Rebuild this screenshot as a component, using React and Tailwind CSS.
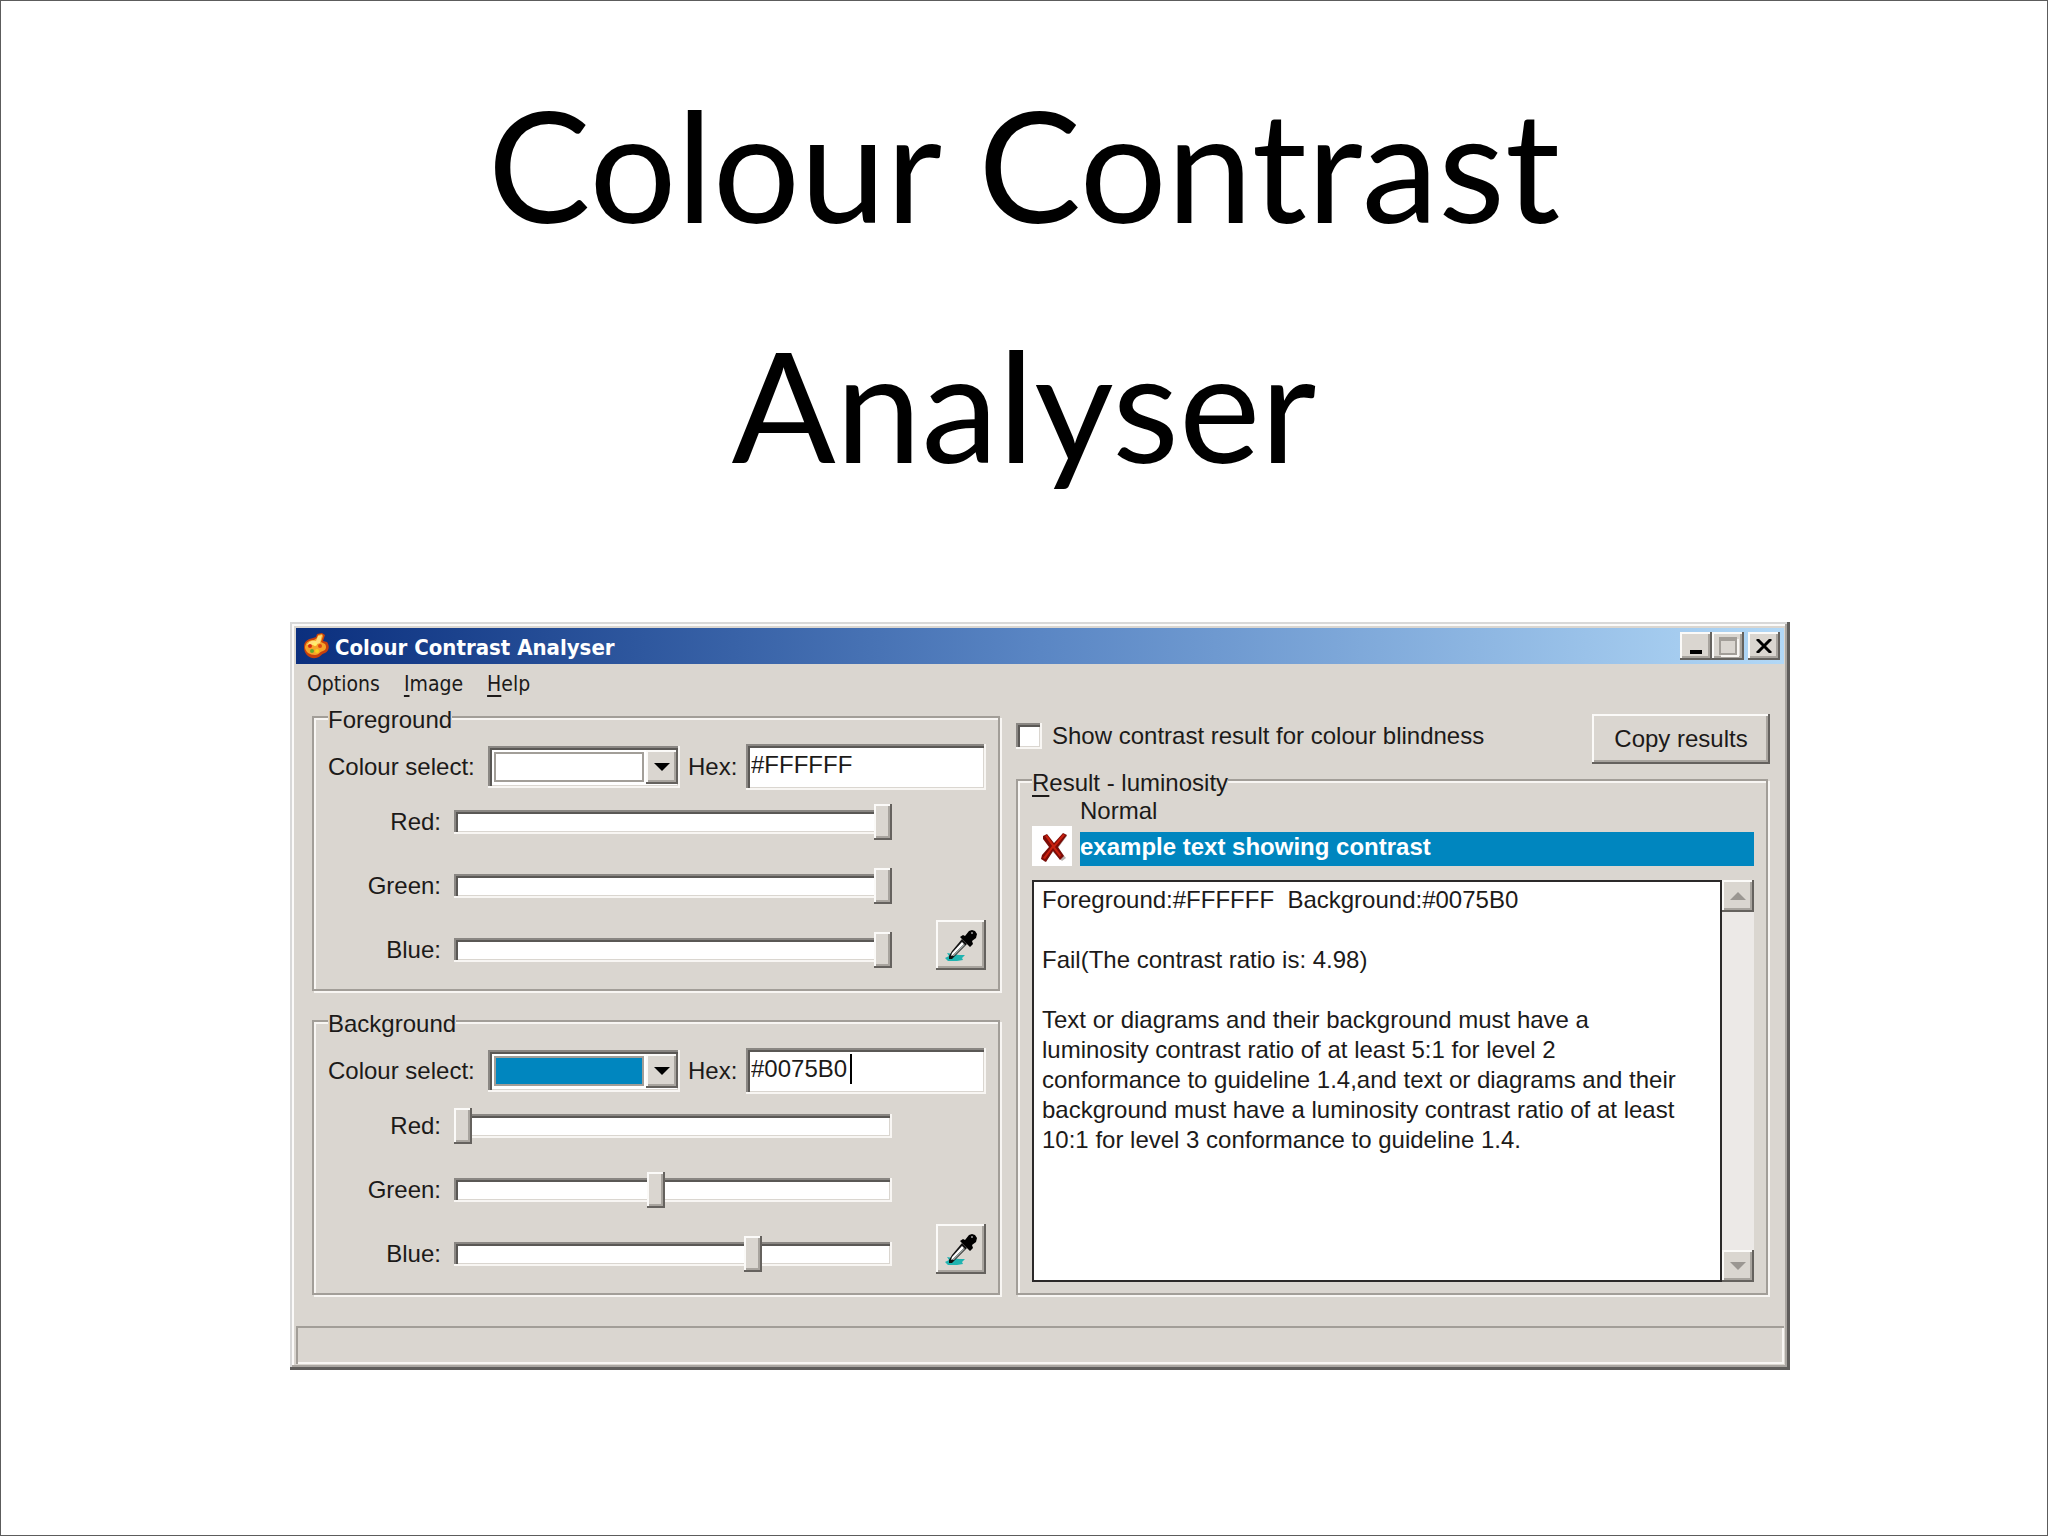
import React, { useState } from "react";
import clsx from "clsx";

const RAISED =
  "bg-[#dad6d0] shadow-[inset_-2px_-2px_0_#65625e,inset_2px_2px_0_#fbfaf8,inset_-4px_-4px_0_#a8a49e]";
const SUNKEN =
  "shadow-[inset_-2px_-2px_0_#f8f6f3,inset_2px_2px_0_#8a8783,inset_4px_4px_0_#5a5855,inset_-3px_-3px_0_#dad6d0]";
const GROUP =
  "min-w-0 border-2 border-[#a29e98] pl-3.5 pr-3 shadow-[2px_2px_0_#f8f6f3,inset_2px_2px_0_#f8f6f3]";

const RESULT_TEXT = `Foreground:#FFFFFF  Background:#0075B0

Fail(The contrast ratio is: 4.98)

Text or diagrams and their background must have a
luminosity contrast ratio of at least 5:1 for level 2
conformance to guideline 1.4,and text or diagrams and their
background must have a luminosity contrast ratio of at least
10:1 for level 3 conformance to guideline 1.4.`;

const PaletteIcon = () => (
  <svg viewBox="0 0 26 26" className="size-[26px]" aria-hidden="true">
    <path
      d="M1 14C1 8 5 6 10 5l3-1 1-3 5-1 3 2-2 6 4 1c3 4 2 9-2 11-4 1-4 4-9 5C6 26 1 21 1 14Z"
      fill="#c8400c"
    />
    <path
      d="M2 14c1-5 4-7 9-7l3-2 1-3 4-1 1 2-2 6 4 2c2 3 1 6-2 7-4 1-4 4-8 4-5 0-10-3-10-8Z"
      fill="#f6a42a"
    />
    <path d="M4 12c2-4 5-5 9-4l2-5 4-1-2 8-6 2Z" fill="#ffdf7c" />
    <circle cx="7" cy="13" r="2" fill="#d62c10" />
    <circle cx="12" cy="11" r="2" fill="#fff06a" />
    <circle cx="17" cy="13" r="2" fill="#e04814" />
    <circle cx="9" cy="18" r="2" fill="#65a82c" />
    <circle cx="14" cy="18" r="2" fill="#f7d21c" />
  </svg>
);

const EyedropperIcon = () => (
  <svg viewBox="0 0 34 34" className="size-[34px]" aria-hidden="true">
    <path d="M1 30l4-2-2-3 6 1 6 1 6 0-3 3 1 2-6 1-9 0Z" fill="#20b3b0" />
    <path d="M18 11l5 5L11 28l-3 3H5v-3l3-5Z" fill="#111" />
    <path d="M18 14l2 2L9 27l-2 1 1-3Z" fill="#fff" />
    <path d="M20 16l1 1L10 28H8Z" fill="#9ba3a1" />
    <path d="M16 9l3-2 2 1 4-5 3-1 3 1 2 3-1 4-4 3 1 3-3 3Z" fill="#000" />
    <path d="M27 4h2v2h-2z" fill="#777" />
  </svg>
);

const CrossIcon = () => (
  <svg viewBox="0 0 40 40" className="size-10 shrink-0 bg-white" role="img" aria-label="Fail">
    <path d="M14 11l8 8 10-11 3 2-9 12 8 10-4 3-9-9-8 10-3-3 8-12-6-8Z" fill="#b9b3b0" />
    <path d="M11 10l4-2 7 9 9-10 4 2-9 12 6 9-4 4-7-9-7 11-5-3 1-4 7-8-6-8Z" fill="#7c0c07" />
    <path d="M13 10l2-1 7 10 9-11 2 1-10 12 6 8-1 2-7-9-8 11-2-1 9-12Z" fill="#c9200f" />
  </svg>
);

const Arrow = ({ up, className }) => (
  <svg viewBox="0 0 16 8" className={clsx("h-2 w-4", className)} aria-hidden="true">
    <path d={up ? "M8 0l8 8H0Z" : "M0 0h16L8 8Z"} fill="currentColor" />
  </svg>
);

const TitleBar = () => (
  <div className="flex h-9 items-center bg-linear-to-r from-[#0b2f7e] via-[#5a86c4] to-[#b2d8f6] pr-1 pl-[7px]">
    <PaletteIcon />
    <h2 className="ml-1.5 flex-1 pt-0.5 font-['DejaVu_Sans_Condensed','DejaVu_Sans',sans-serif] text-[22px] font-bold text-white">
      Colour Contrast Analyser
    </h2>
    <button aria-label="Minimize" className={clsx("flex h-7 w-8 items-end justify-center pb-1.5", RAISED)}>
      <span className="h-1 w-3 bg-black" />
    </button>
    <button aria-label="Maximize" disabled className={clsx("flex h-7 w-8 items-center justify-center", RAISED)}>
      <span className="size-[18px] border-2 border-t-4 border-[#a29e98] shadow-[2px_2px_0_#f8f6f3]" />
    </button>
    <button aria-label="Close" className={clsx("ml-1 flex h-7 w-8 items-center justify-center", RAISED)}>
      <svg viewBox="0 0 16 14" className="h-3.5 w-4" aria-hidden="true">
        <path d="M1 0l14 14M15 0L1 14" stroke="#000" strokeWidth="3" />
      </svg>
    </button>
  </div>
);

const ChannelSlider = ({ id, label, value, onChange }) => (
  <div className="flex h-16 items-center">
    <label htmlFor={id} className="w-[113px] text-right">
      {label}:
    </label>
    <input
      id={id}
      type="range"
      min="0"
      max="255"
      value={value}
      onChange={(e) => onChange(Number(e.target.value))}
      className="ml-[13px] h-9 min-w-0 flex-1 appearance-none bg-transparent [&::-webkit-slider-runnable-track]:h-6 [&::-webkit-slider-runnable-track]:bg-white [&::-webkit-slider-runnable-track]:shadow-[inset_-2px_-2px_0_#f8f6f3,inset_2px_2px_0_#8a8783,inset_4px_4px_0_#5a5855,inset_-3px_-3px_0_#dad6d0] [&::-webkit-slider-thumb]:-mt-1.5 [&::-webkit-slider-thumb]:h-9 [&::-webkit-slider-thumb]:w-[18px] [&::-webkit-slider-thumb]:appearance-none [&::-webkit-slider-thumb]:bg-[#dad6d0] [&::-webkit-slider-thumb]:shadow-[inset_-2px_-2px_0_#65625e,inset_2px_2px_0_#fbfaf8,inset_-4px_-4px_0_#a8a49e]"
    />
  </div>
);

const ColourGroup = ({ name, initial, swatchClass, focused }) => {
  const [rgb, setRgb] = useState(initial.rgb);
  const [hex, setHex] = useState(initial.hex);
  const setChannel = (i) => (v) => setRgb(rgb.map((c, j) => (j === i ? v : c)));

  return (
    <fieldset className={clsx(GROUP, "pb-[7px]")}>
      <legend className="h-6 bg-[#dad6d0] leading-[30px]">{name}</legend>
      <div className="flex h-[61px] items-center pt-[15px]">
        <label htmlFor={`${name}-select`} className="w-40">
          Colour select:
        </label>
        <div className={clsx("flex h-[42px] w-48 bg-white p-1 pr-0.5", SUNKEN)}>
          <select
            id={`${name}-select`}
            className={clsx(
              "m-0.5 min-w-0 flex-1 appearance-none border-2 border-[#a29e98]",
              swatchClass
            )}
          >
            <option value={hex} aria-label={hex}></option>
          </select>
          <span className={clsx("pointer-events-none flex w-8 items-center justify-center", RAISED)}>
            <Arrow className="text-black" />
          </span>
        </div>
        <label htmlFor={`${name}-hex`} className="ml-2 w-[58px]">
          Hex:
        </label>
        <div className="relative min-w-0 flex-1">
          <input
            id={`${name}-hex`}
            type="text"
            value={hex}
            onChange={(e) => setHex(e.target.value)}
            className={clsx("h-[46px] w-full bg-white pr-2 pb-1 pl-[5px] outline-none", SUNKEN)}
          />
          {focused && <span className="absolute top-1.5 left-[104px] h-[30px] w-0.5 bg-black" />}
        </div>
      </div>
      <div className="flex items-end">
        <div className="flex-1">
          {["Red", "Green", "Blue"].map((label, i) => (
            <ChannelSlider
              key={label}
              id={`${name}-${label}`}
              label={label}
              value={rgb[i]}
              onChange={setChannel(i)}
            />
          ))}
        </div>
        <button
          aria-label={`Pick ${name} colour`}
          className={clsx("mb-3 ml-11 flex size-[50px] items-center justify-center", RAISED)}
        >
          <EyedropperIcon />
        </button>
      </div>
    </fieldset>
  );
};

const ResultGroup = () => (
  <fieldset className={clsx(GROUP, "pb-[11px]")}>
    <legend className="h-6 bg-[#dad6d0] leading-[30px]">
      <span className="underline underline-offset-4">R</span>esult - luminosity
    </legend>
    <p className="mt-1 h-[30px] pl-12 leading-[30px]">Normal</p>
    <div className="flex items-end gap-2">
      <CrossIcon />
      <p className="h-[34px] flex-1 bg-[#0086bf] leading-[30px] font-bold text-white">
        example text showing contrast
      </p>
    </div>
    <div className="mt-3.5 flex h-[402px]">
      <textarea
        readOnly
        aria-label="Result"
        value={RESULT_TEXT}
        className="min-w-0 flex-1 resize-none overflow-hidden border-2 border-[#2b2929] bg-white px-2 py-[3px] leading-[30px] whitespace-pre outline-none"
      />
      <div className="flex w-8 flex-col justify-between bg-[#ece9e7]">
        <button aria-label="Scroll up" className={clsx("flex h-8 items-center justify-center", RAISED)}>
          <Arrow up className="text-[#9a9691]" />
        </button>
        <button aria-label="Scroll down" className={clsx("flex h-8 items-center justify-center", RAISED)}>
          <Arrow className="text-[#9a9691]" />
        </button>
      </div>
    </div>
  </fieldset>
);

const AnalyserWindow = () => (
  <section className="w-full max-w-[1500px] bg-[#dad6d0] p-1.5 font-['Liberation_Sans',Arial,sans-serif] text-[24px] text-[#1c1a19] shadow-[inset_-3px_-3px_0_#5f5d5b,inset_2px_2px_0_#d8d8d8,inset_-5px_-5px_0_#aaa6a1,inset_4px_4px_0_#fbfaf9]">
    <TitleBar />
    <nav className="flex h-[41px] items-center gap-6 pl-[11px] font-['DejaVu_Sans_Condensed','DejaVu_Sans',sans-serif] text-[21px]">
      <button>Options</button>
      <button>
        <span className="underline underline-offset-4">I</span>mage
      </button>
      <button>
        <span className="underline underline-offset-4">H</span>elp
      </button>
    </nav>
    <div className="grid grid-cols-[688fr_752fr] gap-x-4 px-4 pb-[31px]">
      <div className="flex flex-col gap-[18px]">
        <ColourGroup
          name="Foreground"
          initial={{ rgb: [255, 255, 255], hex: "#FFFFFF" }}
          swatchClass="bg-white"
        />
        <ColourGroup
          name="Background"
          initial={{ rgb: [0, 117, 176], hex: "#0075B0" }}
          swatchClass="bg-[#0086bf]"
          focused
        />
      </div>
      <div className="min-w-0">
        <div className="-mr-0.5 mb-1 flex items-center justify-between pt-[9px]">
          <label className="flex items-center gap-2.5 pb-1.5">
            <input type="checkbox" className={clsx("size-[26px] appearance-none bg-white", SUNKEN)} />
            Show contrast result for colour blindness
          </label>
          <button className={clsx("h-[50px] w-[178px]", RAISED)}>Copy results</button>
        </div>
        <ResultGroup />
      </div>
    </div>
    <div className="h-[38px] shadow-[inset_2px_2px_0_#a29e98,inset_-2px_-2px_0_#f8f6f3]" />
  </section>
);

export default function App() {
  return (
    <main className="flex min-h-screen flex-col items-center border border-[#5c5c5c] bg-white pt-[43px] pb-16">
      <h1 className="mb-[98px] text-center font-[Lato,sans-serif] text-[154px] leading-[240px] text-black">
        Colour Contrast
        <br />
        Analyser
      </h1>
      <div className="flex w-full justify-center pl-8">
        <AnalyserWindow />
      </div>
    </main>
  );
}
